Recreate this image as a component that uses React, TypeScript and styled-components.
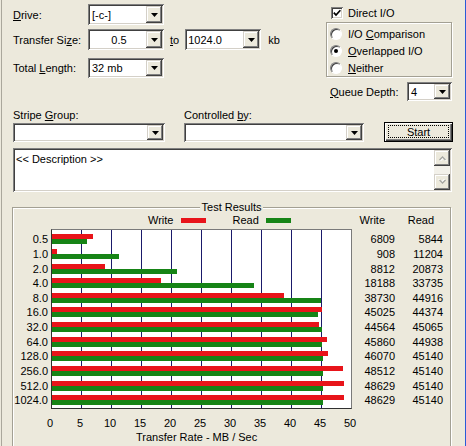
import React from "react";
import styled, { createGlobalStyle } from "styled-components";

const FACE = "#ece9dc";

const Global = createGlobalStyle`
  html, body { margin: 0; padding: 0; background: ${FACE}; }
  body { font-family: "Liberation Sans", Arial, sans-serif; font-size: 11px; color: #000; }
  #root { width: 466px; height: 446px; }
  * { box-sizing: border-box; }
`;

const sunken = `box-shadow: inset 1px 1px 0 #808080, inset -1px -1px 0 #ffffff, inset 2px 2px 0 #404040, inset -2px -2px 0 #d4d0c8;`;
const raised = `box-shadow: inset -1px -1px 0 #404040, inset 1px 1px 0 #d4d0c8, inset -2px -2px 0 #808080, inset 2px 2px 0 #ffffff;`;
const etched = `border: 1px solid #a3a093; box-shadow: inset 1px 1px 0 #ffffff, 1px 1px 0 #ffffff;`;

const Window = styled.div`
  width: 466px;
  height: 446px;
  overflow: hidden;
  background: ${FACE};
  box-shadow: inset 1px 0 0 ${FACE}, inset 2px 0 0 #aaa79c, inset -1px 0 0 #2a5bd7;
  display: flex;
  flex-direction: column;
`;

const U = styled.span`
  text-decoration: underline;
`;

/* ---------- top area ---------- */
const TopArea = styled.div`
  display: flex;
  height: 101px;
  padding-left: 13px;
  flex-shrink: 0;
`;

const LeftForm = styled.div`
  width: 313px;
  display: flex;
  flex-direction: column;
`;

const FormRow = styled.div<{ $mt: number; $h?: number }>`
  display: flex;
  align-items: center;
  margin-top: ${(p) => p.$mt}px;
  height: ${(p) => p.$h ?? 21}px;
`;

const Label = styled.span<{ $w?: number; $ml?: number }>`
  width: ${(p) => (p.$w ? `${p.$w}px` : "auto")};
  margin-left: ${(p) => p.$ml ?? 0}px;
  white-space: nowrap;
  flex-shrink: 0;
`;

const ComboBox = styled.div<{ $w: number; $h?: number }>`
  width: ${(p) => p.$w}px;
  height: ${(p) => p.$h ?? 21}px;
  background: #fff;
  ${sunken}
  display: flex;
  align-items: center;
  padding: 2px;
  flex-shrink: 0;
`;

const ComboText = styled.span<{ $center?: boolean; $pl?: number }>`
  flex: 1;
  padding-left: ${(p) => p.$pl ?? 2}px;
  text-align: ${(p) => (p.$center ? "center" : "left")};
  white-space: nowrap;
  overflow: hidden;
`;

const DropButton = styled.div`
  width: 16px;
  align-self: stretch;
  background: ${FACE};
  ${raised}
  display: flex;
  align-items: center;
  justify-content: center;
`;

const Arrow = () => (
  <svg width="7" height="4" viewBox="0 0 7 4">
    <polygon points="0,0 7,0 3.5,4" fill="#000" />
  </svg>
);

const Combo: React.FC<{ w: number; h?: number; text?: string; center?: boolean; pl?: number }> = ({
  w,
  h,
  text,
  center,
  pl,
}) => (
  <ComboBox $w={w} $h={h}>
    <ComboText $center={center} $pl={pl}>
      {text}
    </ComboText>
    <DropButton>
      <Arrow />
    </DropButton>
  </ComboBox>
);

const RightOptions = styled.div`
  width: 126px;
  display: flex;
  flex-direction: column;
`;

const CheckRow = styled.div`
  display: flex;
  align-items: center;
  height: 15px;
  margin-top: 5px;
  padding-left: 5px;
  gap: 5px;
`;

const CheckBox = styled.span`
  width: 12px;
  height: 12px;
  background: #fff;
  ${sunken}
  display: flex;
  align-items: center;
  justify-content: center;
`;

const RadioGroup = styled.div`
  margin-top: 2px;
  height: 55px;
  ${etched}
  padding: 2px 0 0 3px;
  display: flex;
  flex-direction: column;
`;

const RadioRow = styled.div`
  height: 17px;
  display: flex;
  align-items: center;
  gap: 6px;
`;

const RadioCircle = styled.span<{ $checked?: boolean }>`
  width: 12px;
  height: 12px;
  border-radius: 50%;
  border: 1px solid;
  border-color: #808080 #ffffff #ffffff #808080;
  background: #fff;
  box-shadow: inset 1px 1px 0 #404040;
  display: flex;
  align-items: center;
  justify-content: center;
  &::after {
    content: "";
    width: 4px;
    height: 4px;
    border-radius: 50%;
    background: ${(p) => (p.$checked ? "#000" : "transparent")};
  }
`;

const QueueRow = styled.div`
  margin-top: 5px;
  height: 19px;
  display: flex;
  align-items: center;
  padding-left: 4px;
  justify-content: space-between;
`;

/* ---------- second row ---------- */
const SelectRow = styled.div`
  display: flex;
  align-items: flex-end;
  margin-top: 7px;
  padding-left: 13px;
  flex-shrink: 0;
`;

const SelectField = styled.div<{ $mr: number }>`
  display: flex;
  flex-direction: column;
  margin-right: ${(p) => p.$mr}px;
`;

const FieldLabel = styled.div`
  height: 15px;
  line-height: 15px;
  white-space: nowrap;
`;

const StartButton = styled.button`
  width: 69px;
  height: 20px;
  border: 1px solid #000;
  background: ${FACE};
  box-shadow: inset 1px 1px 0 #ffffff, inset -1px -1px 0 #404040, inset -2px -2px 0 #808080;
  padding: 2px 3px 3px 3px;
  margin-bottom: 0;
  font: inherit;
  color: #000;
  display: flex;
`;

const FocusRect = styled.span`
  flex: 1;
  border: 1px dotted #000;
  display: flex;
  align-items: center;
  justify-content: center;
`;

/* ---------- description ---------- */
const Description = styled.div`
  margin: 6px 0 0 13px;
  width: 439px;
  height: 44px;
  background: #fff;
  ${sunken}
  padding: 2px;
  display: flex;
  flex-shrink: 0;
`;

const DescText = styled.div`
  flex: 1;
  padding: 3px 0 0 1px;
`;

const ScrollBar = styled.div`
  width: 16px;
  display: flex;
  flex-direction: column;
  background: #f3f1ea;
`;

const ScrollBtn = styled.div`
  height: 16px;
  background: ${FACE};
  ${raised}
  display: flex;
  align-items: center;
  justify-content: center;
`;

const ScrollTrack = styled.div`
  flex: 1;
`;

const Chevron: React.FC<{ down?: boolean }> = ({ down }) => (
  <svg width="9" height="6" viewBox="0 0 9 6">
    <g transform={down ? "rotate(180 4.5 3)" : undefined}>
      <polyline points="1.5,5 4.5,2 7.5,5" fill="none" stroke="#ffffff" strokeWidth="1.4" transform="translate(0.8 0.8)" />
      <polyline points="1.5,5 4.5,2 7.5,5" fill="none" stroke="#a5a5a0" strokeWidth="1.4" />
    </g>
  </svg>
);

/* ---------- test results ---------- */
const TestGroup = styled.div`
  position: relative;
  margin: 15px 0 0 12px;
  width: 439px;
  height: 260px;
  flex-shrink: 0;
  ${etched}
  padding-top: 5px;
`;

const GroupCaption = styled.span`
  position: absolute;
  top: -8px;
  left: 50%;
  transform: translateX(-50%);
  background: ${FACE};
  padding: 0 2px;
  line-height: 14px;
  white-space: nowrap;
`;

const ChartGrid = styled.div`
  display: grid;
  grid-template-columns: 38px 301px 43px 48px;
  grid-template-rows: 14px 180px auto;
  row-gap: 2px;
`;

const Legend = styled.div`
  display: flex;
  align-items: center;
  padding-left: 97px;
`;

const LegendSwatch = styled.span<{ $color: string; $ml: number; $mr: number }>`
  width: 25px;
  height: 5px;
  background: ${(p) => p.$color};
  margin-left: ${(p) => p.$ml}px;
  margin-right: ${(p) => p.$mr}px;
`;

const ColHead = styled.div<{ $pr: number }>`
  display: flex;
  align-items: center;
  justify-content: flex-end;
  padding-right: ${(p) => p.$pr}px;
`;

const ROW_H = 14.64;

const ValueCol = styled.div<{ $pr?: number }>`
  padding-top: 3px;
  padding-right: ${(p) => p.$pr ?? 0}px;
  display: flex;
  flex-direction: column;
`;

const ValueCell = styled.div`
  height: ${ROW_H}px;
  display: flex;
  align-items: center;
  justify-content: flex-end;
  white-space: nowrap;
`;

const Plot = styled.div`
  border: 1px solid #303030;
  border-top-color: #7a7a7a;
  border-right-color: #7a7a7a;
  background-color: #fff;
  background-image: repeating-linear-gradient(to right, transparent 0 29px, #1a1a6a 29px 30px);
  padding-top: 2px;
  display: flex;
  flex-direction: column;
`;

const BarRow = styled.div`
  height: ${ROW_H}px;
  display: flex;
  flex-direction: column;
  justify-content: center;
`;

const Bar = styled.div<{ $color: string }>`
  height: 5px;
  background: ${(p) => p.$color};
`;

const AxisCell = styled.div`
  display: flex;
  flex-direction: column;
`;

const Ticks = styled.div`
  display: flex;
  margin-left: -16px;
  margin-top: 6px;
  height: 13px;
`;

const Tick = styled.span`
  width: 30px;
  text-align: center;
  flex-shrink: 0;
`;

const AxisTitle = styled.div`
  padding-left: 85px;
  margin-top: 1px;
  white-space: nowrap;
`;

const RED = "#e8141a";
const GREEN = "#168416";

const sizes = ["0.5", "1.0", "2.0", "4.0", "8.0", "16.0", "32.0", "64.0", "128.0", "256.0", "512.0", "1024.0"];
const writes = [6809, 908, 8812, 18188, 38730, 45025, 44564, 45860, 46070, 48512, 48629, 48629];
const reads = [5844, 11204, 20873, 33735, 44916, 44374, 45065, 44938, 45140, 45140, 45140, 45140];
const ticks = [0, 5, 10, 15, 20, 25, 30, 35, 40, 45, 50];
const PX_PER_MB = 6;

export default function App() {
  return (
    <>
      <Global />
      <Window>
        <TopArea>
          <LeftForm>
            <FormRow $mt={4}>
              <Label $w={75}>
                <U>D</U>rive:
              </Label>
              <Combo w={76} text="[-c-]" />
            </FormRow>
            <FormRow $mt={4}>
              <Label $w={75}>
                Transfer Si<U>z</U>e:
              </Label>
              <Combo w={76} text="0.5" center />
              <Label $ml={6}>
                <U>t</U>o
              </Label>
              <span style={{ width: 6 }} />
              <Combo w={76} text="1024.0" pl={1} />
              <Label $ml={7}>kb</Label>
            </FormRow>
            <FormRow $mt={8} $h={20}>
              <Label $w={75}>
                Total <U>L</U>ength:
              </Label>
              <Combo w={76} h={20} text="32 mb" />
            </FormRow>
          </LeftForm>
          <RightOptions>
            <CheckRow>
              <CheckBox>
                <svg width="8" height="8" viewBox="0 0 8 8">
                  <polyline points="0.8,3.6 3,6 7.4,1.2" fill="none" stroke="#000" strokeWidth="1.7" />
                </svg>
              </CheckBox>
              <span>Direct I/O</span>
            </CheckRow>
            <RadioGroup>
              <RadioRow>
                <RadioCircle />
                <span>
                  I/O <U>C</U>omparison
                </span>
              </RadioRow>
              <RadioRow>
                <RadioCircle $checked />
                <span>
                  <U>O</U>verlapped I/O
                </span>
              </RadioRow>
              <RadioRow>
                <RadioCircle />
                <span>
                  <U>N</U>either
                </span>
              </RadioRow>
            </RadioGroup>
            <QueueRow>
              <span>
                <U>Q</U>ueue Depth:
              </span>
              <Combo w={45} h={19} text="4" />
            </QueueRow>
          </RightOptions>
        </TopArea>

        <SelectRow>
          <SelectField $mr={19}>
            <FieldLabel>
              Stripe <U>G</U>roup:
            </FieldLabel>
            <Combo w={152} h={19} />
          </SelectField>
          <SelectField $mr={20}>
            <FieldLabel>
              Controlled <U>b</U>y:
            </FieldLabel>
            <Combo w={180} h={19} />
          </SelectField>
          <StartButton>
            <FocusRect>Start</FocusRect>
          </StartButton>
        </SelectRow>

        <Description>
          <DescText>&lt;&lt; Description &gt;&gt;</DescText>
          <ScrollBar>
            <ScrollBtn>
              <Chevron />
            </ScrollBtn>
            <ScrollTrack />
            <ScrollBtn>
              <Chevron down />
            </ScrollBtn>
          </ScrollBar>
        </Description>

        <TestGroup>
          <GroupCaption>Test Results</GroupCaption>
          <ChartGrid>
            <div />
            <Legend>
              <span>Write</span>
              <LegendSwatch $color={RED} $ml={8} $mr={26} />
              <span>Read</span>
              <LegendSwatch $color={GREEN} $ml={7} $mr={0} />
            </Legend>
            <ColHead $pr={10}>Write</ColHead>
            <ColHead $pr={9}>Read</ColHead>

            <ValueCol $pr={3}>
              {sizes.map((s) => (
                <ValueCell key={s}>{s}</ValueCell>
              ))}
            </ValueCol>
            <Plot>
              {sizes.map((s, i) => (
                <BarRow key={s}>
                  <Bar $color={RED} style={{ width: (writes[i] / 1000) * PX_PER_MB }} />
                  <Bar $color={GREEN} style={{ width: (reads[i] / 1000) * PX_PER_MB }} />
                </BarRow>
              ))}
            </Plot>
            <ValueCol>
              {writes.map((v, i) => (
                <ValueCell key={i}>{v}</ValueCell>
              ))}
            </ValueCol>
            <ValueCol>
              {reads.map((v, i) => (
                <ValueCell key={i}>{v}</ValueCell>
              ))}
            </ValueCol>

            <div />
            <AxisCell>
              <Ticks>
                {ticks.map((t) => (
                  <Tick key={t}>{t}</Tick>
                ))}
              </Ticks>
              <AxisTitle>Transfer Rate - MB / Sec</AxisTitle>
            </AxisCell>
            <div />
            <div />
          </ChartGrid>
        </TestGroup>
      </Window>
    </>
  );
}
